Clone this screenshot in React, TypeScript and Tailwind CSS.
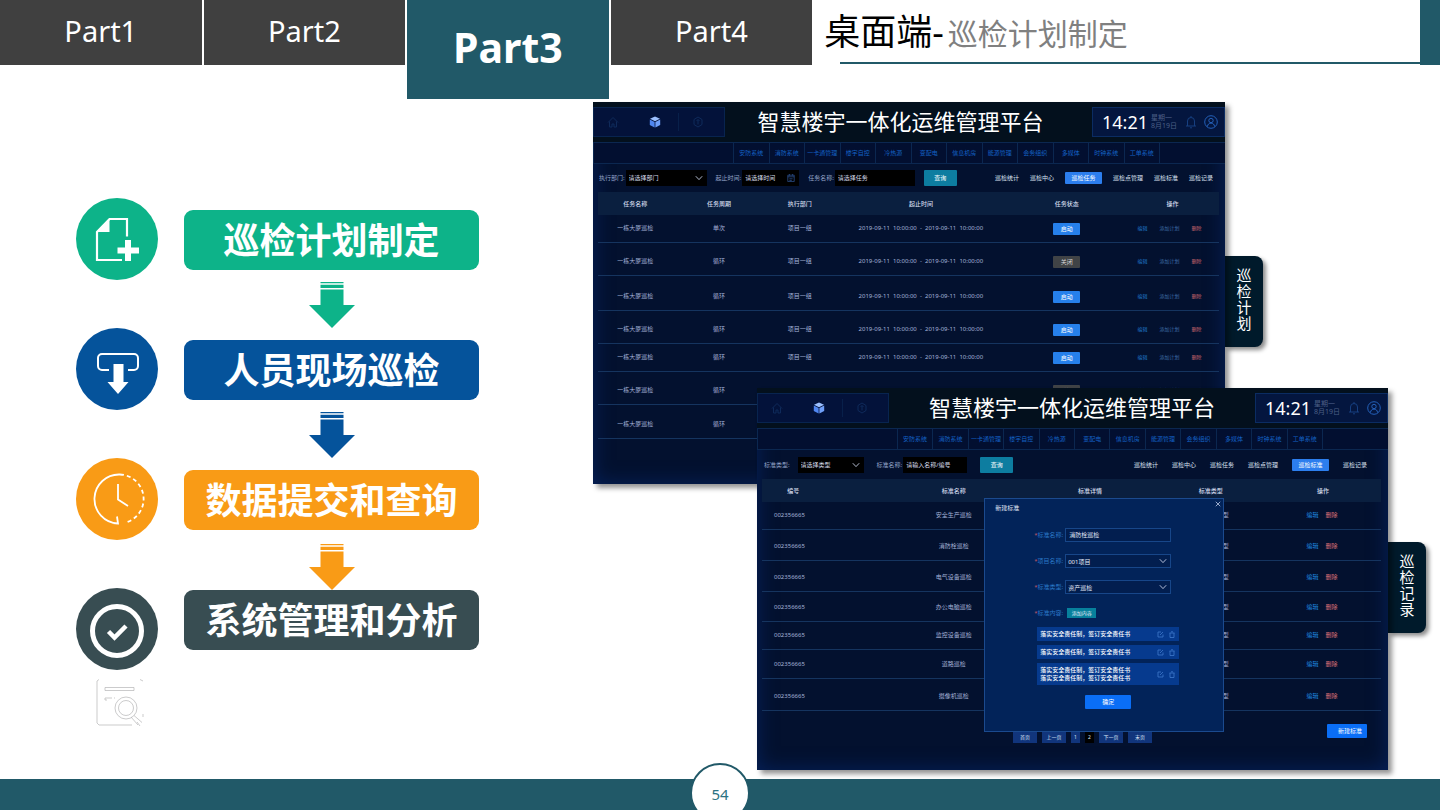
import type { ReactNode } from "react";

const NAV = ["安防系统", "消防系统", "一卡通管理", "楼宇自控", "冷热源", "变配电", "信息机房", "能源管理", "会务组织", "多媒体", "时钟系统", "工单系统"];

const DATE_RANGE = "2019-09-11\u00a0\u00a010:00:00\u00a0\u00a0-\u00a0\u00a02019-09-11\u00a0\u00a010:00:00";

const PLAN_ROWS = [
  { cycle: "单次", h: "h-[27px]", group: "项目一组", range: DATE_RANGE, on: true, ops: true },
  { cycle: "循环", h: "h-[33px]", group: "项目一组", range: DATE_RANGE, on: false, ops: true },
  { cycle: "循环", h: "h-[35px]", group: "项目一组", range: DATE_RANGE, on: true, ops: true },
  { cycle: "循环", h: "h-[33px]", group: "项目一组", range: DATE_RANGE, on: true, ops: true },
  { cycle: "循环", h: "h-[28px]", group: "项目一组", range: DATE_RANGE, on: true, ops: true },
  { cycle: "循环", h: "h-[33px]", group: "", range: "", on: false, ops: true },
  { cycle: "循环", h: "h-[34px]", group: "", range: "", on: false, ops: false },
];

const STANDARD_ROWS = [
  { name: "安全生产巡检", type: "型", h: "h-[27px]" },
  { name: "消防栓巡检", type: "型", h: "h-[31px]" },
  { name: "电气设备巡检", type: "型", h: "h-[31px]" },
  { name: "办公电脑巡检", type: "型", h: "h-[30px]" },
  { name: "监控设备巡检", type: "型", h: "h-[28px]" },
  { name: "道路巡检", type: "型", h: "h-[29px]" },
  { name: "摄像机巡检", type: "类型", h: "h-[32px]" },
];

function Chevron() {
  return (
    <svg viewBox="0 0 10 6" className="pointer-events-none absolute right-1 top-1/2 h-[5px] w-2 -translate-y-1/2" fill="none" stroke="#c9d3ea" strokeWidth="1.1">
      <path d="M1 0.8 5 5 9 0.8" />
    </svg>
  );
}

function FilterSelect({ id, label, value, width, gap }: { id: string; label: string; value: string; width: string; gap: string }) {
  return (
    <div className={`flex items-center ${gap}`}>
      <label htmlFor={id} className="text-[#93a4c8]">{label}</label>
      <div className={`relative ${width}`}>
        <select id={id} className="block h-4 w-full appearance-none bg-black pl-[3px] text-[#d6dcea]">
          <option>{value}</option>
        </select>
        <Chevron />
      </div>
    </div>
  );
}

function FilterInput({ id, label, value, width, calendar }: { id: string; label: string; value: string; width: string; calendar?: boolean }) {
  return (
    <div className="flex items-center gap-px">
      <label htmlFor={id} className="text-[#93a4c8]">{label}</label>
      <div className={`relative ${width}`}>
        <input id={id} placeholder={value} className="block h-4 w-full bg-black pl-[3px] placeholder:text-[#d6dcea]" />
        {calendar && (
          <svg viewBox="0 0 10 10" className="absolute right-1 top-1 h-2 w-2" fill="none" stroke="#2c4f8c" strokeWidth="1">
            <path d="M1 1.5h8v8H1zM1 3.5h8M3 0v2M7 0v2M3 6h4M3 8h3" />
          </svg>
        )}
      </div>
    </div>
  );
}

function SubTabs({ active, gap }: { active: string; gap: string }) {
  const tabs = ["巡检统计", "巡检中心", "巡检任务", "巡检点管理", "巡检标准", "巡检记录"];
  return (
    <nav className={`ml-auto flex items-center ${gap}`}>
      {tabs.map((t) => (
        <a key={t} href="#" className={t === active ? "w-[37px] rounded-[1px] bg-[#2c7eee] text-center leading-[12px] text-white" : "leading-[12px] text-[#dbe2f2]"}>
          {t}
        </a>
      ))}
    </nav>
  );
}

function PlatformPanel({ titlePad, date, children }: { titlePad: string; date: string; children: ReactNode }) {
  return (
    <section className="relative h-[382px] min-w-0 flex-1 bg-[#03112f] text-[6px] leading-[14px] shadow-[4px_4px_5px_rgba(0,0,0,0.42),inset_0_0_20px_#06225c]">
      <div className="flex h-10 items-center bg-[#03101d]">
        <div className="flex h-[30px] w-[132px] items-center border border-[#08244f] bg-[#03123a]">
          <svg viewBox="0 0 12 12" className="ml-[13px] h-3 w-3" fill="none" stroke="#0f2a5a" strokeWidth="1">
            <path d="M1 6.5 6 1.5l5 5M2.500 5.500V11h2.500V8h2v3h2.500V5.500" />
          </svg>
          <svg viewBox="0 0 12 12" className="ml-[30px] h-3 w-3">
            <path d="M6 0.500 11 2.800 6 5.300 1 2.800z" fill="#9cc0ff" />
            <path d="M0.800 3.500 5.600 5.900v5.600L0.800 9z" fill="#4f86f0" />
            <path d="M11.200 3.500 6.400 5.900v5.600L11.200 9z" fill="#6f9ff8" />
          </svg>
          <span className="ml-[17px] h-[18px] w-px bg-[#08204a]" />
          <svg viewBox="0 0 12 12" className="ml-[13px] h-3 w-3" fill="none" stroke="#0f2a5a" strokeWidth="1">
            <path d="M6 1 10 3.500v5L6 11 2 8.500v-5zM6 3.500v5M4.500 5 6 3.500 7.500 5" />
          </svg>
        </div>
        <h2 className={`flex-1 whitespace-nowrap pb-[3px] text-center text-[22px] leading-[36px] text-white ${titlePad}`}>智慧楼宇一体化运维管理平台</h2>
        <div className="flex h-[30px] w-[133px] items-center border border-[#0b2c62] bg-[#04163f] pl-[9px]">
          <time className="text-[18px] leading-[28px] text-white">14:21</time>
          <p className="ml-[3px] text-[7px] leading-[8px] text-[#4c5f86]">
            星期一
            <br />
            {date}
          </p>
          <svg viewBox="0 0 12 14" className="ml-2 h-[14px] w-3" fill="none" stroke="#163f80" strokeWidth="1">
            <path d="M1 11h10M2.500 11V6a3.500 3.500 0 0 1 7 0v5M6 2.500V1M5 12.800h2" />
          </svg>
          <svg viewBox="0 0 14 14" className="ml-[7px] h-[14px] w-[14px]" fill="none" stroke="#2460b8" strokeWidth="1">
            <circle cx="7" cy="7" r="6.300" />
            <circle cx="7" cy="5.500" r="2.200" />
            <path d="M3.500 11.500c0-4.500 7-4.500 7 0" />
          </svg>
        </div>
      </div>
      <nav className="grid h-[22px] grid-cols-[280fr_repeat(12,71fr)_132fr] border-y border-[#0b2750] bg-[#020f30] leading-[20px]">
        <span className="border-l border-[#0b2750]" />
        {NAV.map((n) => (
          <a key={n} href="#" className="whitespace-nowrap border-l border-[#0b2750] text-center text-[#1461c4]">
            {n}
          </a>
        ))}
        <span className="border-l border-[#0b2750]" />
      </nav>
      {children}
    </section>
  );
}

function SideTag({ text }: { text: string }) {
  return (
    <div className="mt-[154px] flex h-[91px] w-[38px] items-center justify-center self-start rounded-r-lg bg-[#001a2b] pb-1.5 shadow-[3px_3px_4px_rgba(0,0,0,0.45)]">
      <span className="w-[15px] break-all text-[15px] leading-4 text-white">{text}</span>
    </div>
  );
}

function PlanPanel() {
  return (
    <PlatformPanel titlePad="pr-4" date="8月19日">
      <div className="flex h-7 items-center gap-[9px] pl-[6px] pr-3">
        <FilterSelect id="dept" label="执行部门:" value="请选择部门" width="w-[81px]" gap="gap-px" />
        <FilterInput id="period" label="起止时间:" value="请选择时间" width="w-[57px]" calendar />
        <FilterInput id="task" label="任务名称:" value="请选择任务" width="w-20" />
        <button className="h-4 w-[33px] rounded-[1px] bg-[#0d7da0] text-white">查询</button>
        <SubTabs active="巡检任务" gap="gap-[11px]" />
      </div>
      <div className="pl-[5px] pr-1.5">
        <table className="w-full table-fixed border-collapse">
          <colgroup>
            <col className="w-[12%]" />
            <col className="w-[15%]" />
            <col className="w-[11%]" />
            <col className="w-[28%]" />
            <col className="w-[19%]" />
            <col className="w-[15%]" />
          </colgroup>
          <thead>
            <tr className="h-[23px] bg-[#0a1f3f] text-[#d3dbec]">
              {["任务名称", "任务周期", "执行部门", "起止时间", "任务状态", "操作"].map((h) => (
                <th key={h} className="p-0 text-center font-medium">{h}</th>
              ))}
            </tr>
          </thead>
          <tbody>
            {PLAN_ROWS.map((r, i) => (
              <tr key={i} className={`border-b border-[#15345f] text-center align-bottom text-[#a3b2d8] [&>td]:p-0 [&>td]:pb-[7px] ${r.h}`}>
                <td>一栋大厦巡检</td>
                <td>{r.cycle}</td>
                <td>{r.group}</td>
                <td className="whitespace-nowrap">{r.range}</td>
                <td>
                  {r.ops && (
                    <span className={r.on ? "mx-auto block h-3 w-[27px] rounded-[1px] bg-[#2680eb] leading-3 text-white" : "mx-auto block h-3 w-[27px] rounded-[1px] bg-[#404346] leading-3 text-[#d8d8d8]"}>
                      {r.on ? "启动" : "关闭"}
                    </span>
                  )}
                </td>
                <td>
                  {r.ops && (
                    <div className="flex justify-center gap-3 pr-1.5 text-[5px]">
                      <button className="text-[#1f78c8]">编辑</button>
                      <button className="text-[#3f6da8]">添加计划</button>
                      <button className="text-[#d06a70]">删除</button>
                    </div>
                  )}
                </td>
              </tr>
            ))}
          </tbody>
        </table>
      </div>
    </PlatformPanel>
  );
}

function DialogField({ id, label, children }: { id: string; label: string; children: ReactNode }) {
  return (
    <div className="grid grid-cols-[78px_106px] items-center gap-0.5">
      <label htmlFor={id} className="text-right text-[#2a78c8]">
        <span className="text-[#c05a6a]">*</span>
        {label}
      </label>
      {children}
    </div>
  );
}

function StandardDialog() {
  const clause = "落实安全责任制，签订安全责任书";
  const items = [[clause], [clause], [clause, clause]];
  return (
    <div role="dialog" aria-labelledby="dialog-title" className="absolute left-[36%] right-[26%] top-[110px] h-[234px] border border-[#1b4a8e] bg-[#022359] text-[#e3eaf8]">
      <div className="flex items-start justify-between pl-[10px] pr-0.5">
        <h3 id="dialog-title" className="pt-0.5">新建标准</h3>
        <button aria-label="关闭" className="pt-0.5">
          <svg viewBox="0 0 8 8" className="h-1.5 w-1.5" stroke="#c9d6f0" strokeWidth="1">
            <path d="M1 1l6 6M7 1l-6 6" />
          </svg>
        </button>
      </div>
      <div className="mt-[13px] flex flex-col gap-3">
        <DialogField id="std-name" label="标准名称:">
          <input id="std-name" defaultValue="消防栓巡检" className="h-[14px] w-full border border-[#174689] bg-[#021e4f] pl-[3px]" />
        </DialogField>
        <DialogField id="std-project" label="项目名称:">
          <div className="relative">
            <select id="std-project" className="block h-[14px] w-full appearance-none border border-[#174689] bg-[#021e4f] pl-0.5">
              <option>001项目</option>
            </select>
            <Chevron />
          </div>
        </DialogField>
        <DialogField id="std-type" label="标准类型:">
          <div className="relative">
            <select id="std-type" className="block h-[14px] w-full appearance-none border border-[#174689] bg-[#021e4f] pl-0.5">
              <option>资产巡检</option>
            </select>
            <Chevron />
          </div>
        </DialogField>
        <DialogField id="std-content" label="标准内容:">
          <button id="std-content" className="ml-0.5 h-[10px] w-[29px] bg-[#07809c] text-[5px] leading-[10px]">添加内容</button>
        </DialogField>
      </div>
      <ul className="ml-[52px] mt-[7px] flex w-[142px] flex-col gap-1">
        {items.map((lines, i) => (
          <li key={i} className="flex items-center bg-[#063a8e] py-[3px] pl-[3px] pr-1 font-medium leading-[8px] text-white">
            <p className="flex-1 whitespace-nowrap">
              {lines.map((l, j) => (
                <span key={j} className="block">{l}</span>
              ))}
            </p>
            <svg viewBox="0 0 18 7" className="h-[7px] w-[18px]" fill="none" stroke="#3f78cc" strokeWidth="0.800">
              <path d="M4 1H1v5h5V3.500M3 4 6 1M12.500 2h5M13 2v4.500h4V2M14 0.800h2" />
            </svg>
          </li>
        ))}
      </ul>
      <button className="ml-[100px] mt-[10px] block h-[14px] w-[46px] rounded-[1px] bg-[#0a6ef6] text-white">确定</button>
    </div>
  );
}

function StandardPanel() {
  return (
    <PlatformPanel titlePad="" date="8月19日">
      <div className="flex h-[29px] items-center gap-[13px] pl-[7px] pr-[21px]">
        <FilterSelect id="type" label="标准类型:" value="请选择类型" width="w-[66px]" gap="gap-2" />
        <FilterInput id="name" label="标准名称:" value="请输入名称/编号" width="w-16" />
        <button className="h-4 w-[33px] rounded-[1px] bg-[#0d7da0] text-white">查询</button>
        <SubTabs active="巡检标准" gap="gap-[14px]" />
      </div>
      <div className="pl-[5px] pr-[7px]">
        <table className="w-full table-fixed border-collapse">
          <colgroup>
            <col className="w-[23%]" />
            <col className="w-[16%]" />
            <col className="w-[28%]" />
            <col className="w-[11%]" />
            <col className="w-[22%]" />
          </colgroup>
          <thead>
            <tr className="h-[23px] bg-[#0a1f3f] text-center text-[#d3dbec] [&>th]:p-0 [&>th]:font-medium">
              <th><span className="pr-20">编号</span></th>
              <th>标准名称</th>
              <th>标准详情</th>
              <th>标准类型</th>
              <th><span className="pl-5">操作</span></th>
            </tr>
          </thead>
          <tbody>
            {STANDARD_ROWS.map((r) => (
              <tr key={r.name} className={`border-b border-[#15345f] text-center align-bottom text-[#a3b2d8] [&>td]:p-0 [&>td]:pb-[7px] ${r.h}`}>
                <td><span className="block pl-3 text-left">002356665</span></td>
                <td>{r.name}</td>
                <td />
                <td><span className="block pr-4 text-right">{r.type}</span></td>
                <td>
                  <div className="flex justify-center gap-[7px] pl-[18px]">
                    <button className="text-[#1f8ae0]">编辑</button>
                    <button className="text-[#d97076]">删除</button>
                  </div>
                </td>
              </tr>
            ))}
          </tbody>
        </table>
      </div>
      <div className="flex items-start pl-[256px] pr-[21px] pt-[13px]">
        <nav className="mt-2 flex gap-[5px] text-[5px] leading-[11px] text-[#dce4f5]">
          <button className="h-[11px] w-6 bg-[#11357c]">首页</button>
          <button className="h-[11px] w-6 bg-[#11357c]">上一页</button>
          <button className="h-[11px] w-[9px] bg-[#11357c]">1</button>
          <button className="h-[11px] w-[9px] bg-black">2</button>
          <button className="h-[11px] w-6 bg-[#11357c]">下一页</button>
          <button className="h-[11px] w-6 bg-[#11357c]">末页</button>
        </nav>
        <button className="ml-auto h-[14px] w-10 rounded-[1px] bg-[#0a6ef6] pl-1.5 text-white">新建标准</button>
      </div>
      <StandardDialog />
    </PlatformPanel>
  );
}

function DownArrow({ color, margin }: { color: string; margin: string }) {
  return (
    <svg viewBox="0 0 46 46" className={`mx-auto h-[46px] w-[46px] shrink-0 ${color} ${margin}`} fill="currentColor">
      <path d="M11.500 0h23v1.300h-23zM11.500 2.700h23v3.300h-23zM11.500 7.500h23V23H46L23 46 0 23h11.500z" />
    </svg>
  );
}

function StepBox({ color, children }: { color: string; children: ReactNode }) {
  return (
    <div className={`flex h-[60px] shrink-0 items-center justify-center whitespace-nowrap rounded-[9px] pt-0.5 text-[36px] font-bold leading-none text-white ${color}`}>
      {children}
    </div>
  );
}

function Flow() {
  return (
    <div className="flex w-[593px] shrink-0 gap-[26px] pl-[76px] pr-[114px] pt-24">
      <div className="flex w-[82px] flex-col gap-12">
        <svg viewBox="0 0 82 82" className="h-[82px] w-[82px]" fill="none" stroke="#fff" strokeWidth="2.200">
          <circle cx="41" cy="41" r="41" fill="#0db389" stroke="none" />
          <path d="M51 38.500V21H33.500L21 34v28h25" />
          <path d="M33.500 21v13H21z" fill="#fff" stroke="none" />
          <path d="M52 42v21M41.500 52.500h21.500" strokeWidth="6" />
        </svg>
        <svg viewBox="0 0 82 82" className="h-[82px] w-[82px]" fill="none" stroke="#fff" strokeWidth="2">
          <circle cx="41" cy="41" r="41" fill="#05539b" stroke="none" />
          <path d="M33 42h-7a4 4 0 0 1-4-4v-8a4 4 0 0 1 4-4h32a4 4 0 0 1 4 4v8a4 4 0 0 1-4 4h-6" />
          <path d="M37.500 36h10v18h5L42 66 31.500 54h6z" fill="#fff" stroke="none" />
        </svg>
        <svg viewBox="0 0 82 82" className="h-[82px] w-[82px]" fill="none" stroke="#fff" strokeWidth="1.800">
          <circle cx="41" cy="41" r="41" fill="#f99b16" stroke="none" />
          <path d="M44 16.500A24.500 24.500 0 1 0 42 65.500l-1-7M42 65.500l-5-0.500" />
          <path d="M44 16.500A24.500 24.500 0 0 1 50 64.500" strokeDasharray="4 3" />
          <path d="M42 26v15.500L52 48" />
        </svg>
        <svg viewBox="0 0 82 82" className="h-[82px] w-[82px]" fill="none" stroke="#fff" strokeWidth="5">
          <circle cx="41" cy="41" r="41" fill="#384d52" stroke="none" />
          <circle cx="41" cy="43" r="24.500" />
          <path d="M32.500 43.500 38.500 49.500 50 38" strokeWidth="4.500" />
        </svg>
        <svg viewBox="0 0 48 48" className="-mt-10 ml-5 h-12 w-12" fill="none" stroke="#b4b4b6" strokeWidth="0.700">
          <path d="M3 1.500 1 3v42l2 2h33M44 1.500 47 3" />
          <path d="M9 9.500h29v3H9zM9 20v2h2M9 20h7M18 20h1M41 44l3 4M47 36v3" />
          <circle cx="30" cy="30" r="11" />
          <circle cx="30" cy="30" r="7.500" />
          <path d="M35 39l7 8M38 37.500l8 7" />
        </svg>
      </div>
      <div className="flex min-w-0 flex-1 flex-col pt-3">
        <StepBox color="bg-[#0db389]">巡检计划制定</StepBox>
        <DownArrow color="text-[#0db389]" margin="my-3" />
        <StepBox color="bg-[#05539b]">人员现场巡检</StepBox>
        <DownArrow color="text-[#05539b]" margin="my-3" />
        <StepBox color="bg-[#f99b16]">数据提交和查询</StepBox>
        <DownArrow color="text-[#f99b16]" margin="mt-[14px]" />
        <StepBox color="bg-[#384d52]">系统管理和分析</StepBox>
      </div>
    </div>
  );
}

export default function App() {
  const part = "flex h-[65px] flex-1 items-center justify-center bg-[#404040] pb-[3px] text-[29px] text-white";
  return (
    <div className="flex min-h-screen flex-col overflow-hidden bg-white font-['Noto_Sans','Noto_Sans_CJK_SC',sans-serif]">
      <header className="flex items-start">
        <nav className="flex w-[56.4%] items-start gap-0.5">
          <a href="#" className={part}>Part1</a>
          <a href="#" className={part}>Part2</a>
          <a href="#" className="flex h-[99px] flex-1 items-center justify-center bg-[#215968] pb-[3px] text-[41px] font-bold text-white">Part3</a>
          <a href="#" className={part}>Part4</a>
        </nav>
        <div className="flex-1">
          <h1 className="h-[62px] whitespace-nowrap pl-3 text-[36px] leading-[64px] text-black">
            桌面端-<span className="ml-1 text-[30px] text-[#808080]">巡检计划制定</span>
          </h1>
          <div className="ml-7 h-0.5 bg-[#215968]" />
        </div>
        <div className="h-[65px] w-5 bg-[#215968]" />
      </header>
      <main className="flex flex-1 pb-[9px] pt-[3px]">
        <Flow />
        <div className="min-w-0 flex-1">
          <div className="mr-[177px] flex">
            <PlanPanel />
            <SideTag text="巡检计划" />
          </div>
          <div className="relative -mt-24 ml-[164px] mr-[14px] flex">
            <StandardPanel />
            <SideTag text="巡检记录" />
          </div>
        </div>
      </main>
      <footer className="relative h-[31px] bg-[#215968]">
        <span className="absolute -top-4 left-1/2 flex h-[60px] w-[60px] -translate-x-1/2 items-center justify-center rounded-full border-2 border-[#215968] bg-white pt-0.5 text-[15px] text-[#2b7283]">54</span>
      </footer>
    </div>
  );
}
